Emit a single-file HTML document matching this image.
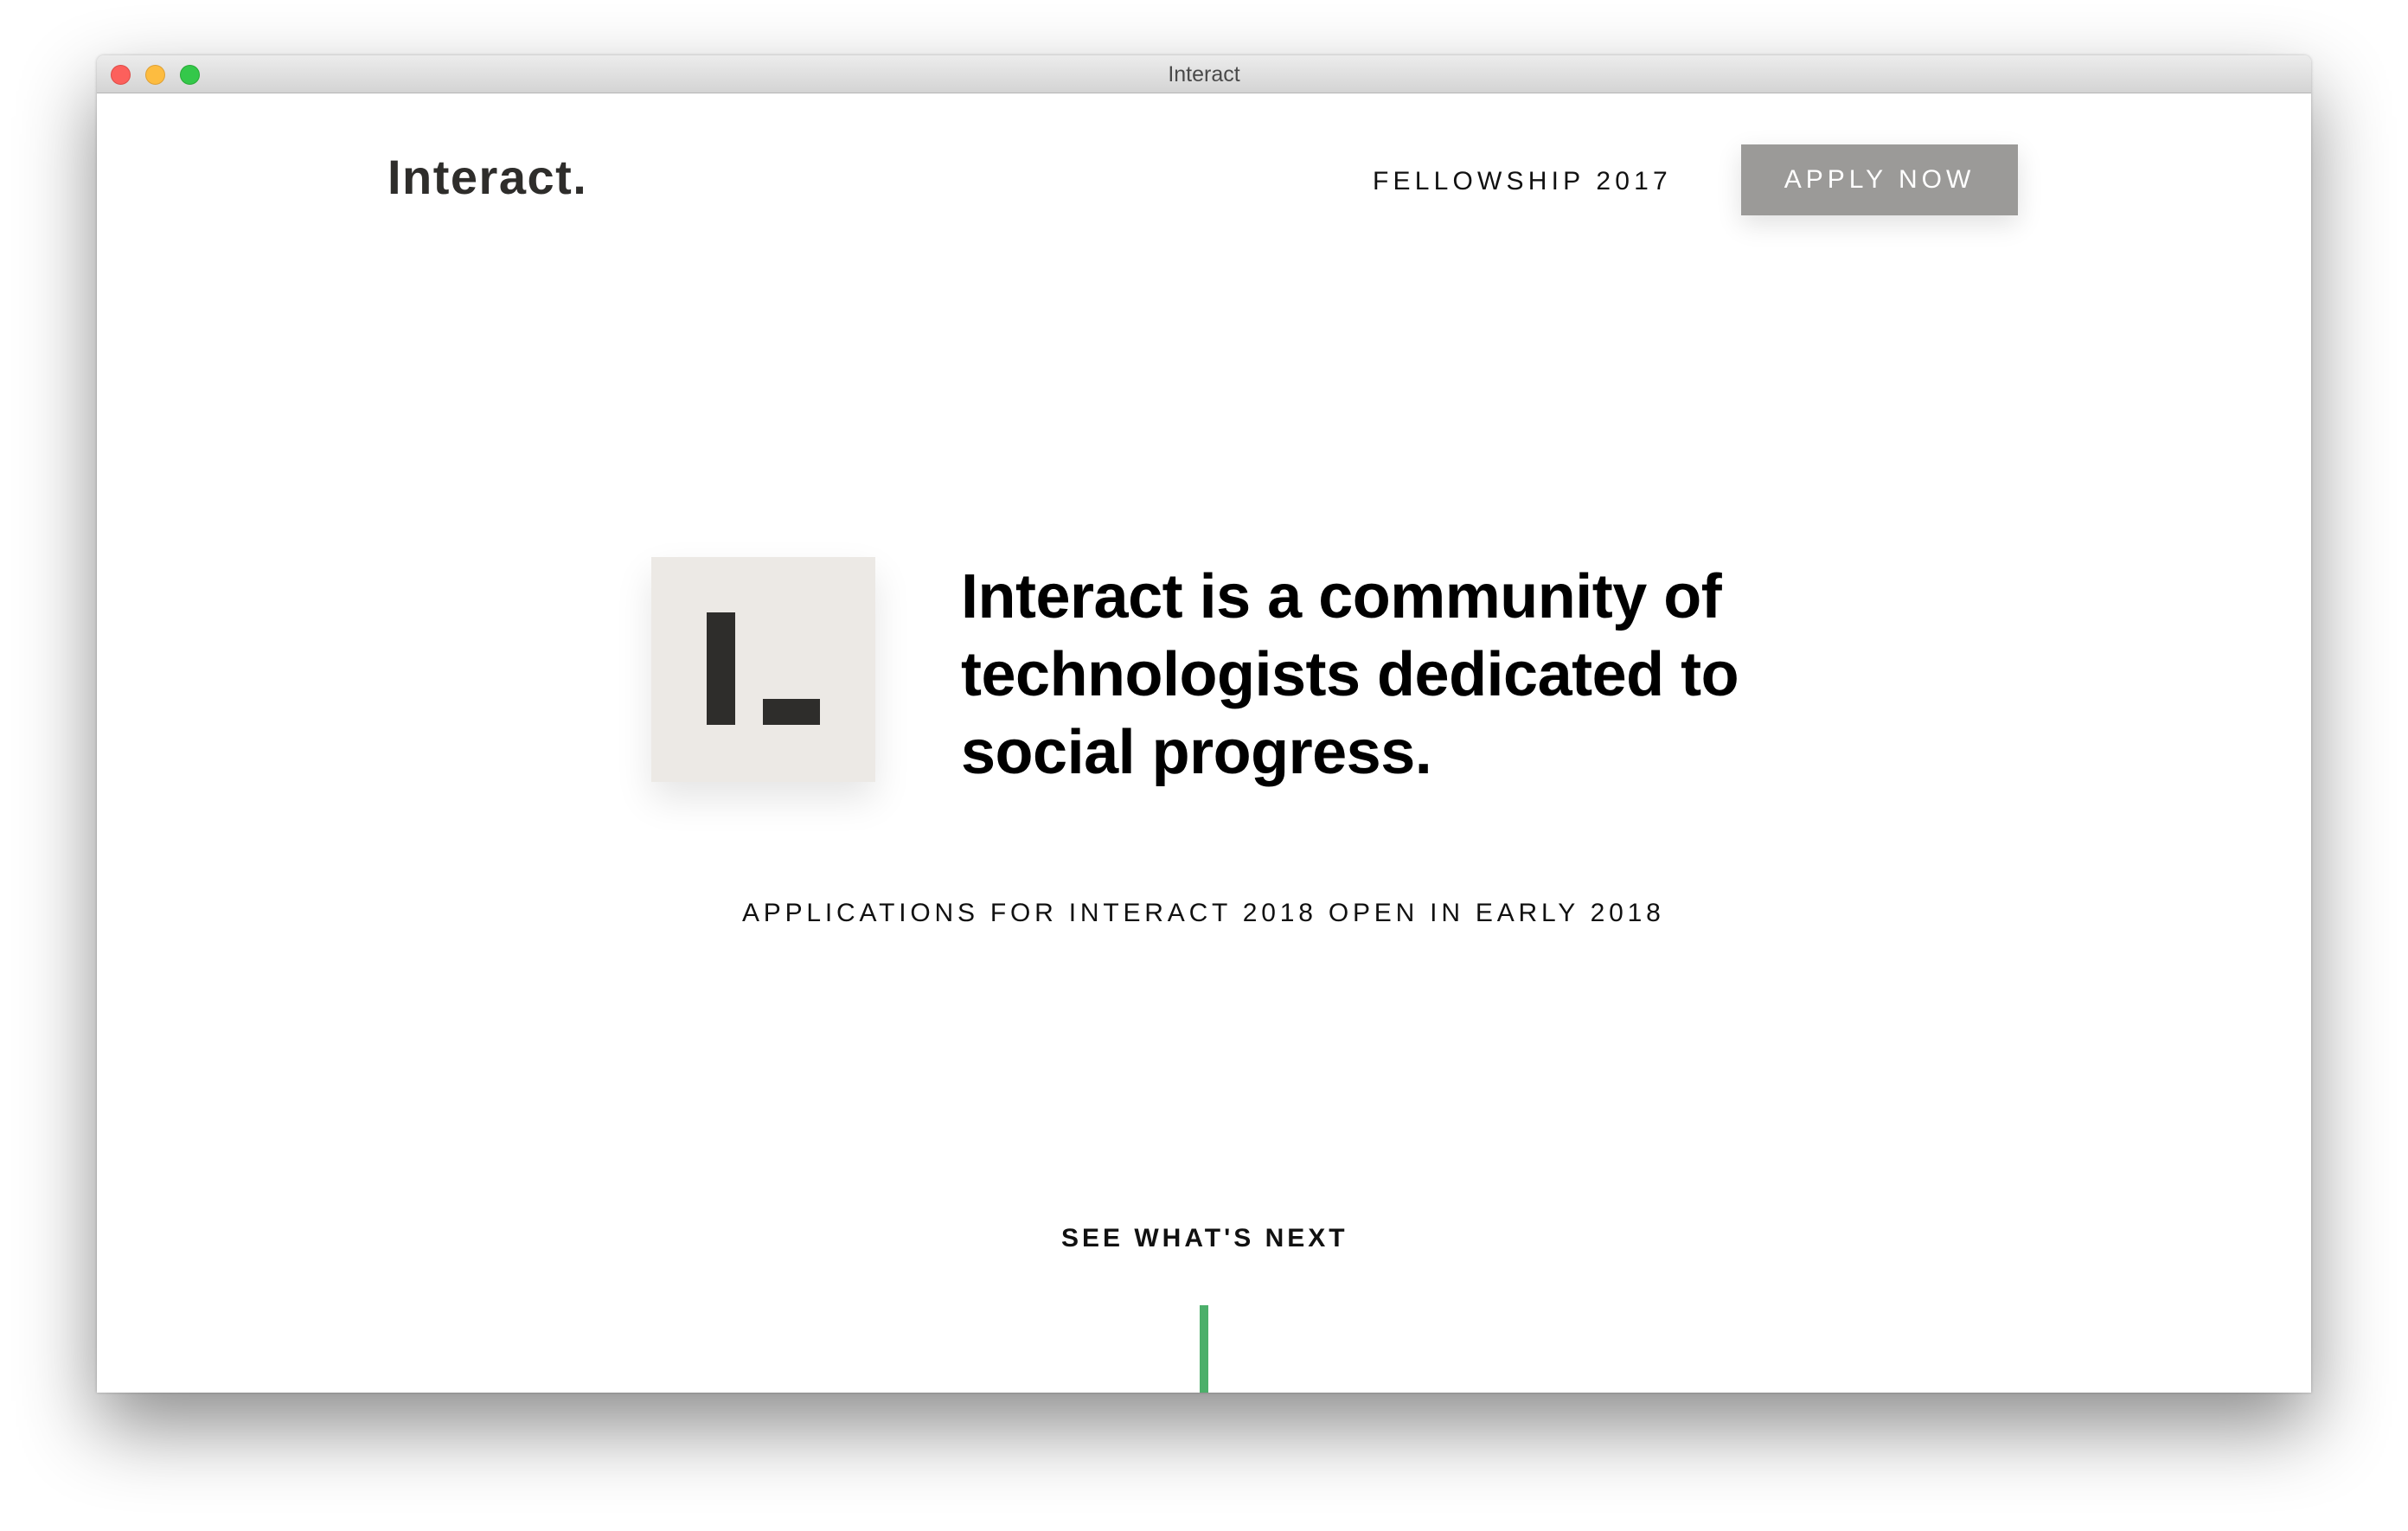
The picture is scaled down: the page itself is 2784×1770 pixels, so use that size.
<!DOCTYPE html>
<html><head><meta charset="utf-8"><style>
html,body{margin:0;padding:0;background:#fff;width:2784px;height:1770px;overflow:hidden;font-family:"Liberation Sans",sans-serif}
.win{position:absolute;left:112px;top:64px;width:2560px;height:1546px;background:#fff;border-radius:8px 8px 0 0;box-shadow:0 40px 90px rgba(0,0,0,.45),0 0 3px rgba(0,0,0,.25);overflow:hidden}
.bar{position:absolute;left:0;top:0;right:0;height:43px;background:linear-gradient(#ececec,#d4d4d4);border-bottom:1px solid #b5b5b5}
.dot{position:absolute;top:11px;width:23px;height:23px;border-radius:50%}
.title{position:absolute;left:0;right:0;top:8px;text-align:center;font-size:25px;color:#4a4a4a}
.abs{position:absolute;white-space:nowrap}
</style></head><body>
<div class="win">
<div class="bar">
<div class="dot" style="left:16px;background:#fc605c;border:1px solid #de4b46;width:21px;height:21px"></div>
<div class="dot" style="left:56px;background:#fdbc40;border:1px solid #dea034;width:21px;height:21px"></div>
<div class="dot" style="left:96px;background:#34c84a;border:1px solid #27aa35;width:21px;height:21px"></div>
<div class="title">Interact</div>
</div>
<div class="abs" style="left:336px;top:106px;font-size:56px;font-weight:bold;color:#2e2d2b;letter-spacing:1.5px;line-height:70px">Interact.</div>
<div class="abs" style="left:1475px;top:126px;font-size:30px;letter-spacing:5.2px;color:#111;line-height:40px">FELLOWSHIP 2017</div>
<div class="abs" style="left:1901px;top:103px;width:320px;height:82px;background:#9b9a98;box-shadow:0 10px 30px rgba(0,0,0,.12);color:#fff;font-size:30px;letter-spacing:5px;text-align:center;line-height:82px">APPLY NOW</div>
<div class="abs" style="left:641px;top:580px;width:259px;height:260px;background:#ece9e5;box-shadow:0 20px 40px rgba(0,0,0,.1)">
<div class="abs" style="left:64px;top:64px;width:33px;height:130px;background:#2e2d2b"></div>
<div class="abs" style="left:129px;top:164px;width:66px;height:30px;background:#2e2d2b"></div>
</div>
<div class="abs" style="left:999px;top:581px;font-size:72px;font-weight:bold;color:#000;line-height:90px;letter-spacing:-0.5px">Interact is a community of<br>technologists dedicated to<br>social progress.</div>
<div class="abs" style="left:746px;top:974px;font-size:30px;letter-spacing:4.8px;color:#111;line-height:36px">APPLICATIONS FOR INTERACT 2018 OPEN IN EARLY 2018</div>
<div class="abs" style="left:1115px;top:1350px;font-size:30px;font-weight:bold;letter-spacing:4px;color:#111;line-height:36px">SEE WHAT'S NEXT</div>
<div class="abs" style="left:1275px;top:1445px;width:10px;height:101px;background:#4caf6a"></div>
</div>
</body></html>
